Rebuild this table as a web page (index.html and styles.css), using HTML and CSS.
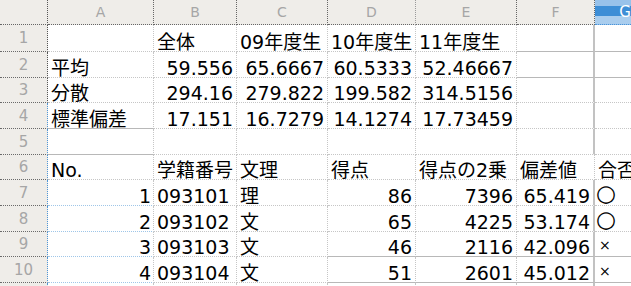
FILE: index.html
```html
<!DOCTYPE html>
<html lang="ja">
<head>
<meta charset="utf-8">
<title>Sheet</title>
<link rel="stylesheet" href="styles.css">
</head>
<body>
<div class="sheet">
  <div class="row h25">
    <div class="hd corner"></div>
    <div class="hd ch">A</div>
    <div class="hd ch">B</div>
    <div class="hd ch">C</div>
    <div class="hd ch dk">D</div>
    <div class="hd ch">E</div>
    <div class="hd ch">F</div>
    <div class="hd ch sel">G</div>
  </div>
  <div class="row h27">
    <div class="hd rh">1</div>
    <div class="c"></div>
    <div class="c">全体</div>
    <div class="c">09年度生</div>
    <div class="c">10年度生</div>
    <div class="c">11年度生</div>
    <div class="c f sb"></div>
    <div class="c sb"></div>
  </div>
  <div class="row h26">
    <div class="hd rh">2</div>
    <div class="c">平均</div>
    <div class="c r">59.556</div>
    <div class="c r">65.6667</div>
    <div class="c r">60.5333</div>
    <div class="c r">52.46667</div>
    <div class="c f sb"></div>
    <div class="c sb"></div>
  </div>
  <div class="row h25">
    <div class="hd rh">3</div>
    <div class="c">分散</div>
    <div class="c r">294.16</div>
    <div class="c r">279.822</div>
    <div class="c r">199.582</div>
    <div class="c r">314.5156</div>
    <div class="c f"></div>
    <div class="c"></div>
  </div>
  <div class="row h26">
    <div class="hd rh blue">4</div>
    <div class="c sb">標準偏差</div>
    <div class="c r">17.151</div>
    <div class="c r">16.7279</div>
    <div class="c r">14.1274</div>
    <div class="c r">17.73459</div>
    <div class="c f"></div>
    <div class="c"></div>
  </div>
  <div class="row h26">
    <div class="hd rh blue">5</div>
    <div class="c sb"></div>
    <div class="c"></div>
    <div class="c"></div>
    <div class="c"></div>
    <div class="c"></div>
    <div class="c f"></div>
    <div class="c"></div>
  </div>
  <div class="row h25">
    <div class="hd rh blue">6</div>
    <div class="c">No.</div>
    <div class="c">学籍番号</div>
    <div class="c">文理</div>
    <div class="c">得点</div>
    <div class="c">得点の2乗</div>
    <div class="c">偏差値</div>
    <div class="c">合否</div>
  </div>
  <div class="row h26">
    <div class="hd rh blue">7</div>
    <div class="c r a">1</div>
    <div class="c">093101</div>
    <div class="c">理</div>
    <div class="c r">86</div>
    <div class="c r">7396</div>
    <div class="c r f">65.419</div>
    <div class="c mk">○</div>
  </div>
  <div class="row h26">
    <div class="hd rh blue">8</div>
    <div class="c r a">2</div>
    <div class="c">093102</div>
    <div class="c">文</div>
    <div class="c r">65</div>
    <div class="c r">4225</div>
    <div class="c r f">53.174</div>
    <div class="c mk">○</div>
  </div>
  <div class="row h25">
    <div class="hd rh blue">9</div>
    <div class="c r a">3</div>
    <div class="c">093103</div>
    <div class="c">文</div>
    <div class="c r sb">46</div>
    <div class="c r sb">2116</div>
    <div class="c r f sb">42.096</div>
    <div class="c x sb">×</div>
  </div>
  <div class="row h26">
    <div class="hd rh blue">10</div>
    <div class="c r a">4</div>
    <div class="c">093104</div>
    <div class="c">文</div>
    <div class="c r sb">51</div>
    <div class="c r sb">2601</div>
    <div class="c r f sb">45.012</div>
    <div class="c x sb">×</div>
  </div>
  <div class="row h26">
    <div class="hd rh blue"></div>
    <div class="c a"></div>
    <div class="c"></div>
    <div class="c"></div>
    <div class="c"></div>
    <div class="c"></div>
    <div class="c f"></div>
    <div class="c"></div>
  </div>
</div>
</body>
</html>
```
FILE: styles.css
```css
html, body {
  margin: 0;
  padding: 0;
  background: #ffffff;
  overflow: hidden;
}

body {
  font-family: "DejaVu Sans", "Noto Sans CJK JP", sans-serif;
  color: #000000;
}

.sheet {
  width: 655px;
}

.row {
  display: grid;
  grid-template-columns: 48px 106px 83px 91px 88px 101px 78px 60px;
}

.h25 { height: 25px; }
.h26 { height: 26px; }
.h27 { height: 27px; }

.c {
  box-sizing: border-box;
  display: flex;
  align-items: flex-end;
  padding: 0 3px;
  font-size: 19px;
  line-height: 18px;
  white-space: nowrap;
  border-right: 1px dotted #c6c6c6;
  border-bottom: 1px dotted #c6c6c6;
  min-width: 0;
}

.r {
  justify-content: flex-end;
}

.a {
  padding-right: 2px;
  border-bottom-color: #9fc6e8;
}

.f {
  border-right: 2px solid #c2c2c2;
}

.sb {
  border-bottom: 1px solid #b8b8b8;
}

.mk {
  padding-left: 1px;
  padding-bottom: 2px;
  font-size: 23px;
  line-height: 20px;
}

.x {
  padding-left: 4px;
  font-size: 14px;
  line-height: 16px;
  padding-bottom: 3px;
}

.hd {
  box-sizing: border-box;
  display: flex;
  align-items: center;
  justify-content: center;
  background: #efede9;
  color: #a6a6a6;
  white-space: nowrap;
}

.corner {
  border-right: 1px dotted #555555;
  border-bottom: 1px dotted #666666;
}

.ch {
  font-size: 14px;
  border-right: 1px dotted #666666;
  border-bottom: 1px dotted #666666;
}

.ch.dk {
  border-right-color: #9a9a9a;
}

.ch.sel {
  background: linear-gradient(#98c2ea 0, #98c2ea 6px, #3d8ed6 6px, #3d8ed6 16px, #a9cdee 16px);
  color: #ffffff;
  border-right: none;
  border-bottom: 1px dotted #4a94d8;
  font-size: 15px;
}

.rh {
  font-size: 15px;
  border-right: 1px dotted #555555;
  border-bottom: 1px dotted #6a6a6a;
}

.rh.blue {
  border-right-color: #4f96d6;
}
```
